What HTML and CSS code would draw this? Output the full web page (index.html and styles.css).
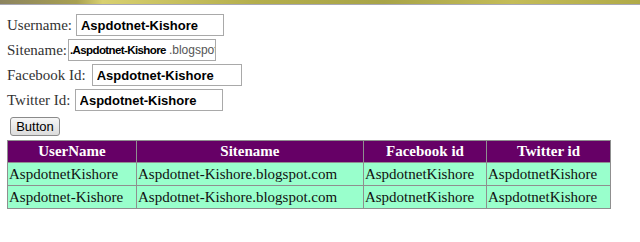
FILE: index.html
```html
<!DOCTYPE html>
<html lang="en">
<head>
  <meta charset="UTF-8" />
  <title>Bind GridView</title>
  <link rel="stylesheet" href="styles.css">
</head>
<body>
  <div class="top-strip"></div>

  <form class="user-form">
    <div class="field">
      <label>Username:</label>
      <input type="text" class="txt" value="Aspdotnet-Kishore" />
    </div>
    <div class="field">
      <label class="lbl-tight">Sitename:</label>
      <div class="txt txt-site"><span class="site-main">.Aspdotnet-Kishore</span> <span class="site-rest">.blogspot.com</span></div>
    </div>
    <div class="field">
      <label class="lbl-loose">Facebook Id:</label>
      <input type="text" class="txt txt-wide" value="Aspdotnet-Kishore" />
    </div>
    <div class="field">
      <label>Twitter Id:</label>
      <input type="text" class="txt" value="Aspdotnet-Kishore" />
    </div>
    <button type="button" class="btn">Button</button>
  </form>

  <table class="grid">
    <tr>
      <th class="col-user">UserName</th>
      <th class="col-site">Sitename</th>
      <th class="col-fb">Facebook id</th>
      <th class="col-tw">Twitter id</th>
    </tr>
    <tr>
      <td>AspdotnetKishore</td>
      <td>Aspdotnet-Kishore.blogspot.com</td>
      <td>AspdotnetKishore</td>
      <td>AspdotnetKishore</td>
    </tr>
    <tr>
      <td>Aspdotnet-Kishore</td>
      <td>Aspdotnet-Kishore.blogspot.com</td>
      <td>AspdotnetKishore</td>
      <td>AspdotnetKishore</td>
    </tr>
  </table>
</body>
</html>
```

FILE: styles.css
```css
/* Загальні стилі */
html, body {
  margin: 0;
  padding: 0;
  background: #ffffff;
  font-family: 'Liberation Serif', 'Times New Roman', serif;
  color: #1a1a1a;
}

/* Смуга зверху */
.top-strip {
  height: 4px;
  background: linear-gradient(to right, #8c8460 0%, #a8a050 12%, #d8d070 16%, #b4ae4c 40%, #a8a448 60%, #c4bc58 80%, #b0aa48 100%);
  border-bottom: 1px solid #a8a8b4;
}

/* Форма */
.user-form {
  padding: 9px 0 0 7px;
}
.field {
  display: flex;
  align-items: center;
  height: 22px;
  margin-bottom: 3px;
  font-size: 15px;
  color: #333;
}
.field label {
  margin-right: 4px;
  white-space: nowrap;
}
.field .lbl-tight {
  margin-right: 1px;
}
.field .lbl-loose {
  margin-right: 6px;
}
.txt {
  box-sizing: border-box;
  width: 148px;
  height: 22px;
  border: 1px solid #a9a9a9;
  padding: 1px 4px;
  font-family: 'Liberation Sans', Arial, sans-serif;
  font-size: 13px;
  font-weight: 700;
  color: #000;
  margin: 0;
}
.txt-wide {
  width: 150px;
}
.txt-site {
  display: flex;
  align-items: center;
  overflow: hidden;
  white-space: nowrap;
  padding: 1px 1px;
  font-size: 11.5px;
}
.site-main {
  letter-spacing: -0.6px;
}
.site-rest {
  font-weight: 400;
  font-size: 12px;
  color: #555;
  margin-left: 3px;
}
.btn {
  margin: 3px 0 0 3px;
  width: 50px;
  height: 19px;
  padding: 0;
  font-family: 'Liberation Sans', Arial, sans-serif;
  font-size: 13px;
  color: #000;
  border: 1px solid #8a8a8a;
  border-radius: 3px;
  background: linear-gradient(#f6f6f6, #dcdcdc);
}

/* Таблиця */
.grid {
  margin: 4px 0 0 7px;
  border-collapse: collapse;
  width: 604px;
  font-size: 15px;
}
.grid th,
.grid td {
  border: 1px solid #8f8f8f;
  padding: 0 1px;
  white-space: nowrap;
}
.grid th {
  height: 21px;
  background: #660066;
  color: #ffffff;
  font-weight: 700;
  text-align: center;
}
.grid td {
  height: 22px;
  background: #99ffcc;
  color: #111;
}
.col-user { width: 127px; }
.col-site { width: 226px; }
.col-fb { width: 121px; }
.col-tw { width: 122px; }
```
